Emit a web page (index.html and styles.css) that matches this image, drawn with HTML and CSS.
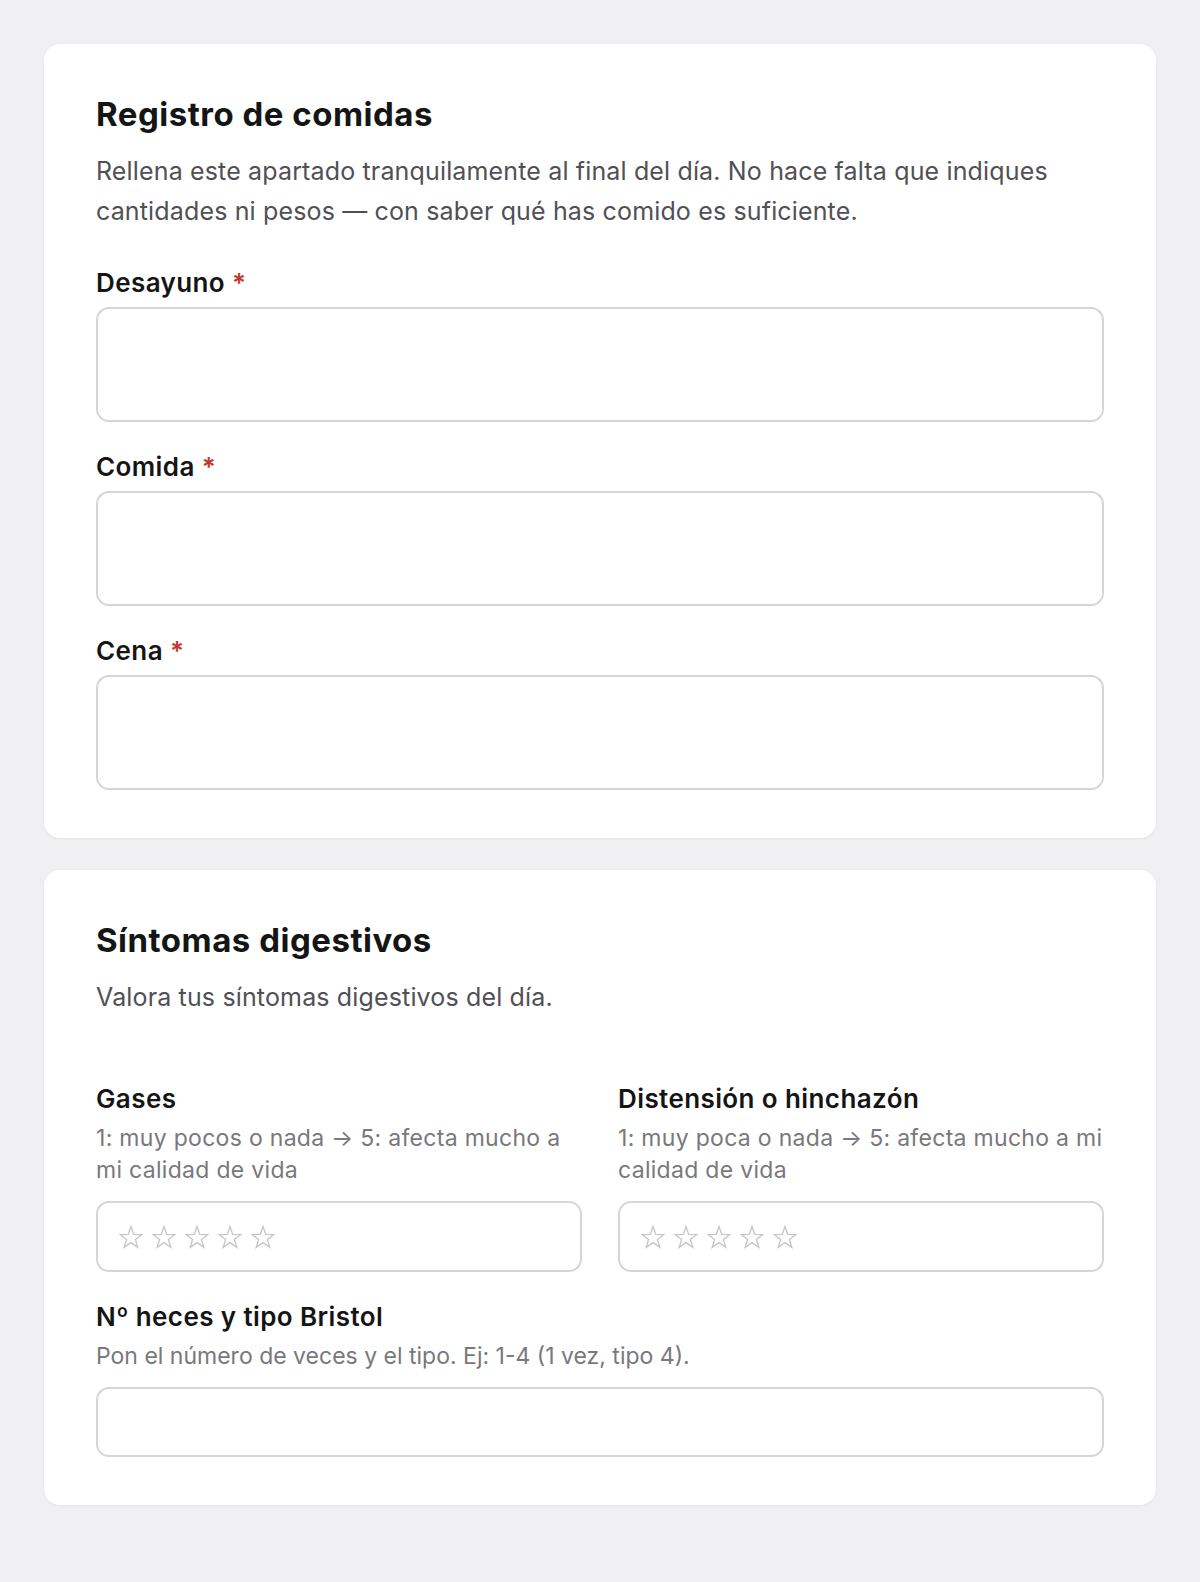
FILE: index.html
```html
<!DOCTYPE html>
<html lang="es">
<head>
  <meta charset="UTF-8">
  <meta name="viewport" content="width=device-width, initial-scale=1.0">
  <title>Diario digestivo</title>
  <link rel="stylesheet" href="styles.css">
</head>
<body>
  <main class="page">

    <!-- Comidas del día -->
    <section class="card">
      <h2 class="card-title">Registro de comidas</h2>
      <p class="card-desc">Rellena este apartado tranquilamente al final del día. No hace falta que indiques cantidades ni pesos — con saber qué has comido es suficiente.</p>

      <div class="field">
        <label class="field-label" for="desayuno">Desayuno <span class="req">*</span></label>
        <textarea class="input input-tall" id="desayuno"></textarea>
      </div>

      <div class="field">
        <label class="field-label" for="comida">Comida <span class="req">*</span></label>
        <textarea class="input input-tall" id="comida"></textarea>
      </div>

      <div class="field">
        <label class="field-label" for="cena">Cena <span class="req">*</span></label>
        <textarea class="input input-tall" id="cena"></textarea>
      </div>
    </section>

    <!-- Síntomas -->
    <section class="card">
      <h2 class="card-title">Síntomas digestivos</h2>
      <p class="card-desc">Valora tus síntomas digestivos del día.</p>

      <div class="rating-grid">
        <div class="rating-field">
          <span class="field-label">Gases</span>
          <span class="field-hint">1: muy pocos o nada → 5: afecta mucho a mi calidad de vida</span>
          <div class="input rating">
            <svg class="star" viewBox="0 0 24 24"><polygon points="12,1.5 14.7,9.3 22.9,9.5 16.4,14.4 18.8,22.3 12,17.6 5.2,22.3 7.6,14.4 1.1,9.5 9.3,9.3"/></svg>
            <svg class="star" viewBox="0 0 24 24"><polygon points="12,1.5 14.7,9.3 22.9,9.5 16.4,14.4 18.8,22.3 12,17.6 5.2,22.3 7.6,14.4 1.1,9.5 9.3,9.3"/></svg>
            <svg class="star" viewBox="0 0 24 24"><polygon points="12,1.5 14.7,9.3 22.9,9.5 16.4,14.4 18.8,22.3 12,17.6 5.2,22.3 7.6,14.4 1.1,9.5 9.3,9.3"/></svg>
            <svg class="star" viewBox="0 0 24 24"><polygon points="12,1.5 14.7,9.3 22.9,9.5 16.4,14.4 18.8,22.3 12,17.6 5.2,22.3 7.6,14.4 1.1,9.5 9.3,9.3"/></svg>
            <svg class="star" viewBox="0 0 24 24"><polygon points="12,1.5 14.7,9.3 22.9,9.5 16.4,14.4 18.8,22.3 12,17.6 5.2,22.3 7.6,14.4 1.1,9.5 9.3,9.3"/></svg>
          </div>
        </div>
        <div class="rating-field">
          <span class="field-label">Distensión o hinchazón</span>
          <span class="field-hint">1: muy poca o nada → 5: afecta mucho a mi calidad de vida</span>
          <div class="input rating">
            <svg class="star" viewBox="0 0 24 24"><polygon points="12,1.5 14.7,9.3 22.9,9.5 16.4,14.4 18.8,22.3 12,17.6 5.2,22.3 7.6,14.4 1.1,9.5 9.3,9.3"/></svg>
            <svg class="star" viewBox="0 0 24 24"><polygon points="12,1.5 14.7,9.3 22.9,9.5 16.4,14.4 18.8,22.3 12,17.6 5.2,22.3 7.6,14.4 1.1,9.5 9.3,9.3"/></svg>
            <svg class="star" viewBox="0 0 24 24"><polygon points="12,1.5 14.7,9.3 22.9,9.5 16.4,14.4 18.8,22.3 12,17.6 5.2,22.3 7.6,14.4 1.1,9.5 9.3,9.3"/></svg>
            <svg class="star" viewBox="0 0 24 24"><polygon points="12,1.5 14.7,9.3 22.9,9.5 16.4,14.4 18.8,22.3 12,17.6 5.2,22.3 7.6,14.4 1.1,9.5 9.3,9.3"/></svg>
            <svg class="star" viewBox="0 0 24 24"><polygon points="12,1.5 14.7,9.3 22.9,9.5 16.4,14.4 18.8,22.3 12,17.6 5.2,22.3 7.6,14.4 1.1,9.5 9.3,9.3"/></svg>
          </div>
        </div>
      </div>

      <div class="field field-wide">
        <label class="field-label" for="heces">Nº heces y tipo Bristol</label>
        <span class="field-hint">Pon el número de veces y el tipo. Ej: 1-4 (1 vez, tipo 4).</span>
        <input class="input input-short" id="heces" type="text">
      </div>
    </section>

  </main>
</body>
</html>
```

FILE: styles.css
```css
body {
  margin: 0;
  background: #f0f0f2;
  font-family: Inter, "Noto Sans", sans-serif;
  color: #151515;
}

.page {
  padding: 44px 44px 60px;
  display: flex;
  flex-direction: column;
  gap: 32px;
}

.card {
  background: #ffffff;
  border-radius: 16px;
  box-shadow: 0 1px 3px rgba(0, 0, 0, 0.06);
  padding: 50px 52px 48px;
  display: flex;
  flex-direction: column;
}

.card-title {
  margin: 0;
  font-size: 33px;
  font-weight: 700;
  line-height: 40px;
  letter-spacing: 0.5px;
}

.card-desc {
  margin: 17px 0 36px;
  font-size: 25px;
  line-height: 40px;
  letter-spacing: 0.15px;
  color: #505055;
}

.field,
.rating-field {
  display: flex;
  flex-direction: column;
}

.field + .field {
  margin-top: 29px;
}

.field-label {
  font-size: 26px;
  font-weight: 600;
  line-height: 32px;
  letter-spacing: 0.4px;
  margin-bottom: 8px;
}

.req {
  color: #c0392b;
}

.field-hint {
  font-size: 23px;
  line-height: 32px;
  color: #78787d;
  margin: -1px 0 15px;
}

.input {
  box-sizing: border-box;
  width: 100%;
  border: 2px solid #d6d6da;
  border-radius: 13px;
  background: #fff;
  font: inherit;
  resize: none;
  margin: 0;
}

.input-tall {
  height: 115px;
}

.input-short {
  height: 70px;
}

/* dos valoraciones lado a lado */
.rating-grid {
  display: grid;
  grid-template-columns: 1fr 1fr;
  align-items: start;
  column-gap: 36px;
  margin-top: 30px;
}

.rating-field .field-hint {
  letter-spacing: 0.3px;
}

.field-wide {
  margin-top: 29px;
}

.rating {
  height: 71px;
  display: flex;
  align-items: center;
  gap: 9px;
  padding: 0 21px;
}

.star {
  width: 24px;
  height: 24px;
  fill: none;
  stroke: #c5c5cc;
  stroke-width: 1.3;
  stroke-linejoin: miter;
}
```
